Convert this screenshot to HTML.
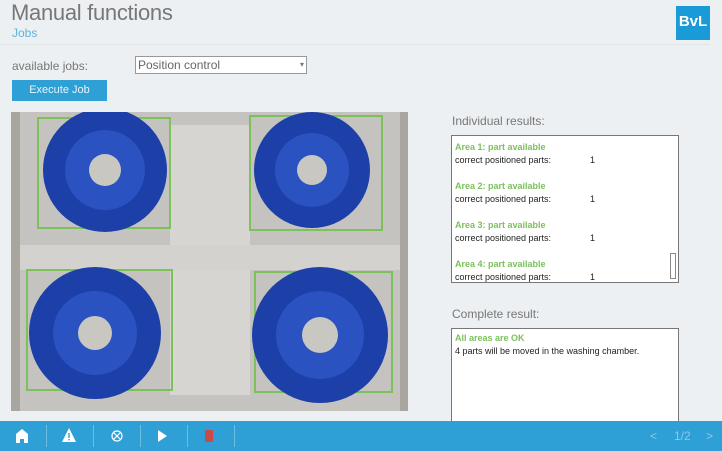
<!DOCTYPE html>
<html><head><style>
body{margin:0;width:722px;height:451px;background:#edf0f3;font-family:"Liberation Sans",sans-serif;position:relative;overflow:hidden}
.a{position:absolute}
</style></head><body>
<div class="a" style="left:11px;top:0px;font-size:22px;color:#777;letter-spacing:-0.3px">Manual functions</div>
<div class="a" style="left:12px;top:26px;font-size:12px;color:#5bb3df">Jobs</div>
<div class="a" style="left:0;top:44px;width:710px;height:1px;background:#e2e5e8"></div>
<div class="a" style="left:676px;top:6px;width:34px;height:34px;background:#1a9ad6;color:#fff;font-weight:bold;font-size:15px;text-align:center;line-height:32px">BvL</div>
<div class="a" style="left:12px;top:59px;font-size:12px;color:#777">available jobs:</div>
<div class="a" style="left:135px;top:56px;width:168px;height:16px;background:#fff;border:1px solid #999;font-size:12px;color:#666;line-height:16px;padding-left:2px;box-sizing:content-box">Position control<span style="position:absolute;right:2px;top:0;font-size:8px;color:#777">▾</span></div>
<div class="a" style="left:12px;top:80px;width:95px;height:21px;background:#2ea0d6;color:#e6f4fb;font-size:11px;text-align:center;line-height:21px">Execute Job</div>
<svg class="a" style="left:11px;top:112px" width="397" height="299" viewBox="11 112 397 299">
<rect x="11" y="112" width="397" height="299" fill="#a9a6a0"/>
<rect x="20" y="112" width="380" height="299" fill="#c4c3c0"/>
<rect x="170" y="125" width="80" height="270" fill="#d6d5d2"/>
<rect x="20" y="245" width="380" height="25" fill="#d3d2ce"/>
<g stroke="#7dc15a" stroke-width="2" fill="none">
<rect x="38" y="118" width="132" height="110"/><rect x="250" y="116" width="132" height="114"/>
<rect x="27" y="270" width="145" height="120"/><rect x="255" y="272" width="137" height="120"/>
</g>
<g fill="#1d3fa8">
<circle cx="105" cy="170" r="62"/><circle cx="312" cy="170" r="58"/>
<circle cx="95" cy="333" r="66"/><circle cx="320" cy="335" r="68"/>
</g>
<g fill="#2a52c0"><circle cx="105" cy="170" r="40"/><circle cx="312" cy="170" r="37"/><circle cx="95" cy="333" r="42"/><circle cx="320" cy="335" r="44"/></g>
<g fill="#c9c7c2"><circle cx="105" cy="170" r="16"/><circle cx="312" cy="170" r="15"/><circle cx="95" cy="333" r="17"/><circle cx="320" cy="335" r="18"/></g>
</svg>
<div class="a" style="left:452px;top:114px;font-size:12px;color:#777">Individual results:</div>
<div class="a" style="left:451px;top:135px;width:226px;height:146px;background:#fff;border:1px solid #777;font-size:9px;color:#222">
<div style="position:absolute;left:3px;top:5px;line-height:13px">
<div style="color:#7cc05c;font-weight:bold">Area 1: part available</div><div style="position:relative">correct positioned parts:<span style="position:absolute;left:135px">1</span></div><div>&nbsp;</div>
<div style="color:#7cc05c;font-weight:bold">Area 2: part available</div><div style="position:relative">correct positioned parts:<span style="position:absolute;left:135px">1</span></div><div>&nbsp;</div>
<div style="color:#7cc05c;font-weight:bold">Area 3: part available</div><div style="position:relative">correct positioned parts:<span style="position:absolute;left:135px">1</span></div><div>&nbsp;</div>
<div style="color:#7cc05c;font-weight:bold">Area 4: part available</div><div style="position:relative">correct positioned parts:<span style="position:absolute;left:135px">1</span></div>
</div>
<div style="position:absolute;right:2px;top:117px;width:4px;height:24px;border:1px solid #888"></div>
</div>
<div class="a" style="left:452px;top:307px;font-size:12px;color:#777">Complete result:</div>
<div class="a" style="left:451px;top:328px;width:226px;height:95px;background:#fff;border:1px solid #777;font-size:9px;color:#222;line-height:13px">
<div style="padding:3px 3px"><div style="color:#7cc05c;font-weight:bold">All areas are OK</div><div>4 parts will be moved in the washing chamber.</div></div></div>
<div class="a" style="left:0;top:421px;width:722px;height:30px;background:#2ea0d6"></div>
<div class="a" style="left:46px;top:425px;width:1px;height:22px;background:#6cbde3"></div>
<div class="a" style="left:93px;top:425px;width:1px;height:22px;background:#6cbde3"></div>
<div class="a" style="left:140px;top:425px;width:1px;height:22px;background:#6cbde3"></div>
<div class="a" style="left:187px;top:425px;width:1px;height:22px;background:#6cbde3"></div>
<div class="a" style="left:234px;top:425px;width:1px;height:22px;background:#6cbde3"></div>
<svg class="a" style="left:16px;top:429px" width="12" height="14"><path d="M6 0L12 5V14H8V10H4V14H0V5Z" fill="#fff"/></svg>
<svg class="a" style="left:62px;top:428px" width="14" height="14"><path d="M7 0L14 14H0Z" fill="#fff"/><rect x="6.3" y="5" width="1.4" height="5" fill="#2ea0d6"/><rect x="6.3" y="11" width="1.4" height="1.4" fill="#2ea0d6"/></svg>
<svg class="a" style="left:111px;top:430px" width="12" height="12"><circle cx="6" cy="6" r="5" stroke="#fff" fill="none" stroke-width="1.2"/><path d="M3 3L9 9M9 3L3 9" stroke="#fff" stroke-width="1.2"/></svg>
<svg class="a" style="left:158px;top:430px" width="10" height="12"><path d="M0 0L9 6L0 12Z" fill="#fff"/></svg>
<div class="a" style="left:205px;top:430px;width:8px;height:12px;background:#c94a4a"></div>
<div class="a" style="left:650px;top:429px;font-size:12px;color:#8cc9ea">&lt;</div>
<div class="a" style="left:674px;top:429px;font-size:12px;color:#8cc9ea">1/2</div>
<div class="a" style="left:706px;top:429px;font-size:12px;color:#8cc9ea">&gt;</div>
</body></html>
